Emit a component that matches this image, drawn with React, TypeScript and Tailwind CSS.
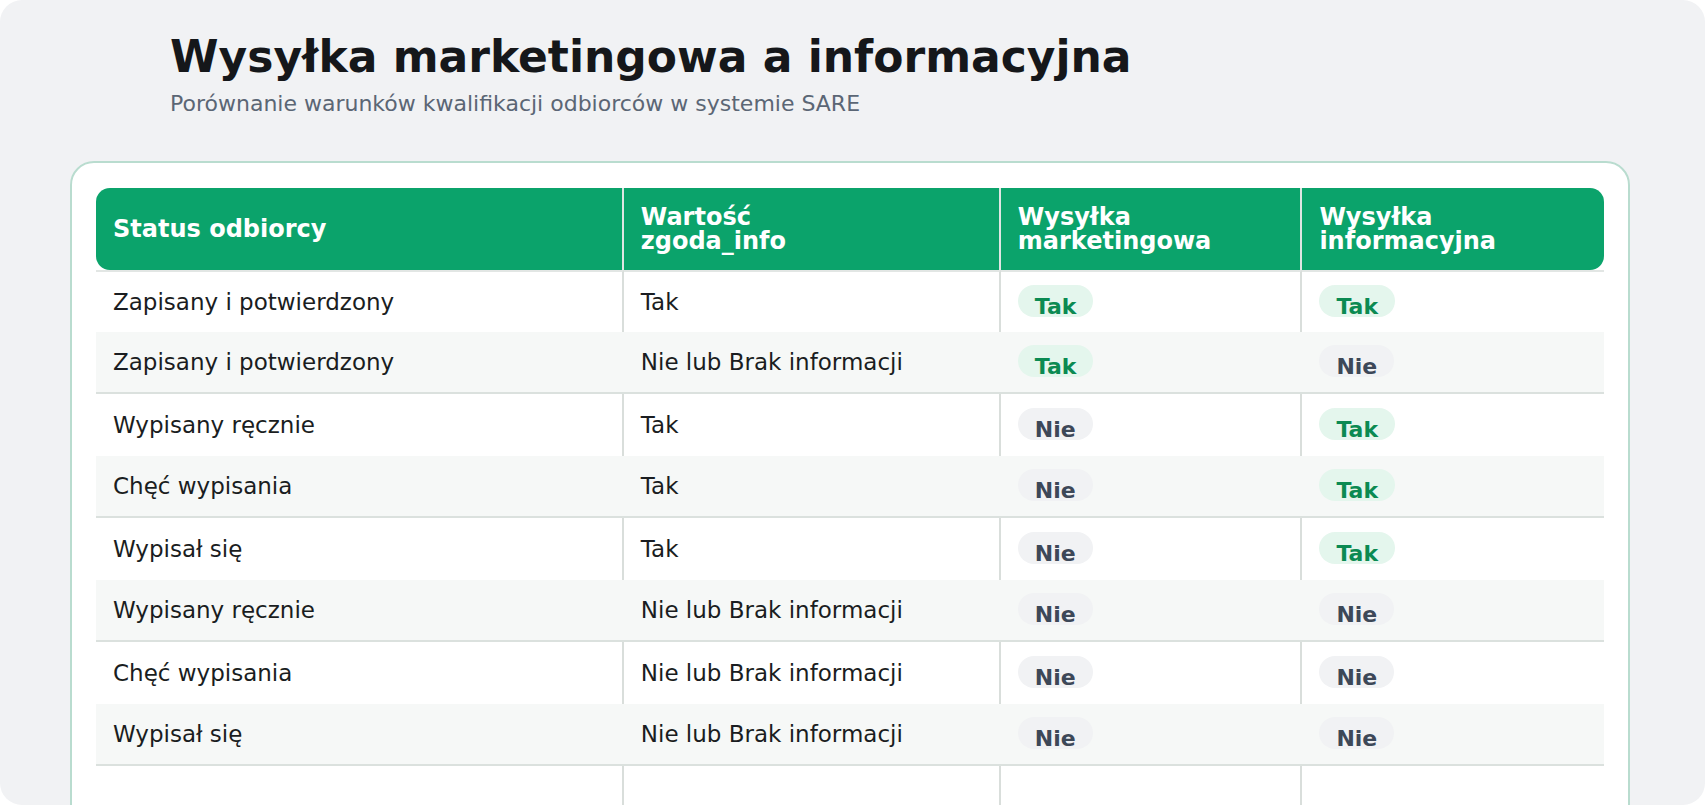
import React from 'react';

type Row = {
  status: string;
  zgoda: string;
  marketing: boolean;
  info: boolean;
};

const rows: Row[] = [
  { status: 'Zapisany i potwierdzony', zgoda: 'Tak', marketing: true, info: true },
  { status: 'Zapisany i potwierdzony', zgoda: 'Nie lub Brak informacji', marketing: true, info: false },
  { status: 'Wypisany ręcznie', zgoda: 'Tak', marketing: false, info: true },
  { status: 'Chęć wypisania', zgoda: 'Tak', marketing: false, info: true },
  { status: 'Wypisał się', zgoda: 'Tak', marketing: false, info: true },
  { status: 'Wypisany ręcznie', zgoda: 'Nie lub Brak informacji', marketing: false, info: false },
  { status: 'Chęć wypisania', zgoda: 'Nie lub Brak informacji', marketing: false, info: false },
  { status: 'Wypisał się', zgoda: 'Nie lub Brak informacji', marketing: false, info: false },
];

const Badge = ({ yes }: { yes: boolean }) => (
  <span
    className={`inline-block h-[32px] rounded-full px-[17px] pt-[11px] text-[22px] font-bold leading-[21px] ${
      yes ? 'bg-[#e4f6ed] text-[#0b8a52]' : 'bg-[#f1f2f4] text-[#3d4858]'
    }`}
  >
    {yes ? 'Tak' : 'Nie'}
  </span>
);

const App = () => {
  return (
    <div className="min-h-screen bg-white font-['DejaVu_Sans',sans-serif]">
      <div className="h-[805px] overflow-hidden rounded-[22px] bg-[#f1f2f4] pl-[70px] pr-[75px] pt-[31px]">
        {/* Page heading */}
        <div className="pl-[100px]">
          <h1 className="text-[44px] font-bold leading-[51px] text-[#15171a]">
            Wysyłka marketingowa a informacyjna
          </h1>
          <p className="mt-[9px] text-[22px] leading-[26px] text-[#5b6675]">
            Porównanie warunków kwalifikacji odbiorców w systemie SARE
          </p>
        </div>

        {/* Comparison card */}
        <div className="mt-[44px] rounded-[24px] border-2 border-[#b9dccf] bg-white px-[24px] pt-[25px] pb-[40px]">
          <table className="w-full table-fixed border-separate border-spacing-0 text-left">
            <colgroup>
              <col className="w-[35%]" />
              <col className="w-[25%]" />
              <col className="w-[20%]" />
              <col className="w-[20%]" />
            </colgroup>
            <thead>
              <tr className="bg-[#0ba36b] text-[24px] font-bold leading-[24px] text-white">
                <th className="rounded-l-[14px] border-r-2 border-[#dfe6e3] px-[17px] py-[17px]">Status odbiorcy</th>
                <th className="border-r-2 border-[#dfe6e3] px-[17px] py-[17px]">
                  Wartość
                  <br />
                  zgoda_info
                </th>
                <th className="border-r-2 border-[#dfe6e3] px-[17px] py-[17px]">
                  Wysyłka
                  <br />
                  marketingowa
                </th>
                <th className="rounded-r-[14px] px-[17px] py-[17px]">
                  Wysyłka
                  <br />
                  informacyjna
                </th>
              </tr>
            </thead>
            <tbody className="text-[23px] leading-[26px] text-[#1a1d21]">
              {rows.map((row, i) => {
                const odd = i % 2 === 1;
                const first = i === 0 ? 'border-t-2 border-t-[#e2e6e4]' : '';
                if (odd) {
                  return (
                    <tr key={i} className="bg-[#f6f8f7]">
                      <td className="h-[62px] border-b-2 border-[#dbe1de] px-[17px] py-0">{row.status}</td>
                      <td className="h-[62px] border-b-2 border-[#dbe1de] px-[17px] py-0">{row.zgoda}</td>
                      <td className="h-[62px] border-b-2 border-[#dbe1de] px-[17px] py-0">
                        <Badge yes={row.marketing} />
                      </td>
                      <td className="h-[62px] border-b-2 border-[#dbe1de] px-[17px] py-0">
                        <Badge yes={row.info} />
                      </td>
                    </tr>
                  );
                }
                return (
                  <tr key={i}>
                    <td className={`h-[62px] border-r-2 border-r-[#d9dedb] px-[17px] py-0 ${first}`}>{row.status}</td>
                    <td className={`h-[62px] border-r-2 border-r-[#d9dedb] px-[17px] py-0 ${first}`}>{row.zgoda}</td>
                    <td className={`h-[62px] border-r-2 border-r-[#d9dedb] px-[17px] py-0 ${first}`}>
                      <Badge yes={row.marketing} />
                    </td>
                    <td className={`h-[62px] px-[17px] py-0 ${first}`}>
                      <Badge yes={row.info} />
                    </td>
                  </tr>
                );
              })}
              <tr>
                <td className="h-[62px] border-r-2 border-r-[#d9dedb] px-[17px] py-0"></td>
                <td className="h-[62px] border-r-2 border-r-[#d9dedb] px-[17px] py-0"></td>
                <td className="h-[62px] border-r-2 border-r-[#d9dedb] px-[17px] py-0"></td>
                <td className="h-[62px] px-[17px] py-0"></td>
              </tr>
            </tbody>
          </table>
        </div>
      </div>
    </div>
  );
};

export default App;
